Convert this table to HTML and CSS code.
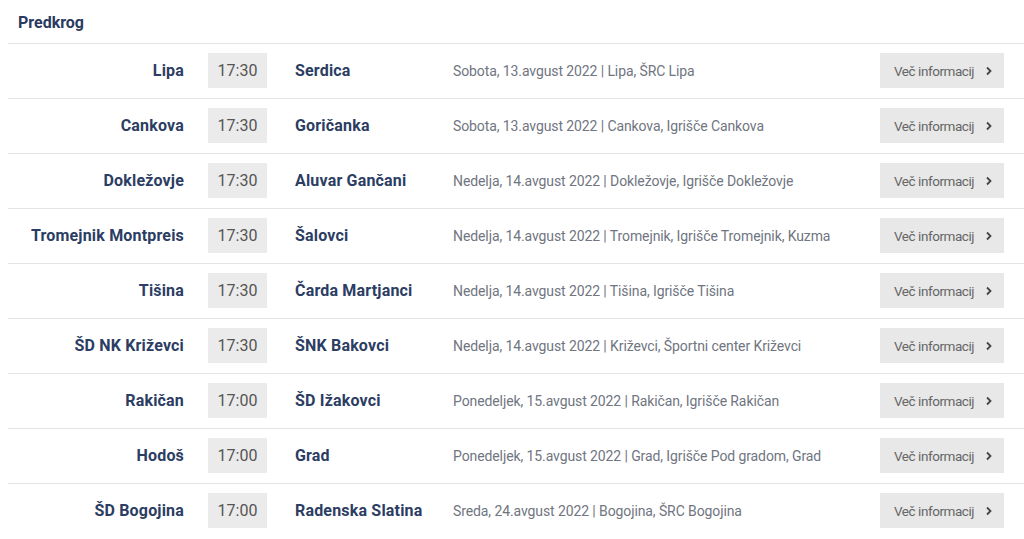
FILE: index.html
```html
<!DOCTYPE html>
<html lang="sl">
<head>
<meta charset="utf-8">
<title>Predkrog</title>
<link rel="stylesheet" href="styles.css">
</head>
<body>
<section class="round">
  <h2 class="round-title">Predkrog</h2>
  <div class="match">
    <div class="home">Lipa</div><div class="time">17:30</div><div class="away">Serdica</div>
    <div class="info">Sobota, 13.avgust 2022 | Lipa, ŠRC Lipa</div>
    <a class="more" href="#">Več informacij <svg viewBox="0 0 10 10" width="10" height="10"><path d="M3 1.5 L6.5 5 L3 8.5" fill="none" stroke="#444" stroke-width="1.8"/></svg></a>
  </div>
  <div class="match">
    <div class="home">Cankova</div><div class="time">17:30</div><div class="away">Goričanka</div>
    <div class="info">Sobota, 13.avgust 2022 | Cankova, Igrišče Cankova</div>
    <a class="more" href="#">Več informacij <svg viewBox="0 0 10 10" width="10" height="10"><path d="M3 1.5 L6.5 5 L3 8.5" fill="none" stroke="#444" stroke-width="1.8"/></svg></a>
  </div>
  <div class="match">
    <div class="home">Dokležovje</div><div class="time">17:30</div><div class="away">Aluvar Gančani</div>
    <div class="info">Nedelja, 14.avgust 2022 | Dokležovje, Igrišče Dokležovje</div>
    <a class="more" href="#">Več informacij <svg viewBox="0 0 10 10" width="10" height="10"><path d="M3 1.5 L6.5 5 L3 8.5" fill="none" stroke="#444" stroke-width="1.8"/></svg></a>
  </div>
  <div class="match">
    <div class="home">Tromejnik Montpreis</div><div class="time">17:30</div><div class="away">Šalovci</div>
    <div class="info">Nedelja, 14.avgust 2022 | Tromejnik, Igrišče Tromejnik, Kuzma</div>
    <a class="more" href="#">Več informacij <svg viewBox="0 0 10 10" width="10" height="10"><path d="M3 1.5 L6.5 5 L3 8.5" fill="none" stroke="#444" stroke-width="1.8"/></svg></a>
  </div>
  <div class="match">
    <div class="home">Tišina</div><div class="time">17:30</div><div class="away">Čarda Martjanci</div>
    <div class="info">Nedelja, 14.avgust 2022 | Tišina, Igrišče Tišina</div>
    <a class="more" href="#">Več informacij <svg viewBox="0 0 10 10" width="10" height="10"><path d="M3 1.5 L6.5 5 L3 8.5" fill="none" stroke="#444" stroke-width="1.8"/></svg></a>
  </div>
  <div class="match">
    <div class="home">ŠD NK Križevci</div><div class="time">17:30</div><div class="away">ŠNK Bakovci</div>
    <div class="info">Nedelja, 14.avgust 2022 | Križevci, Športni center Križevci</div>
    <a class="more" href="#">Več informacij <svg viewBox="0 0 10 10" width="10" height="10"><path d="M3 1.5 L6.5 5 L3 8.5" fill="none" stroke="#444" stroke-width="1.8"/></svg></a>
  </div>
  <div class="match">
    <div class="home">Rakičan</div><div class="time">17:00</div><div class="away">ŠD Ižakovci</div>
    <div class="info">Ponedeljek, 15.avgust 2022 | Rakičan, Igrišče Rakičan</div>
    <a class="more" href="#">Več informacij <svg viewBox="0 0 10 10" width="10" height="10"><path d="M3 1.5 L6.5 5 L3 8.5" fill="none" stroke="#444" stroke-width="1.8"/></svg></a>
  </div>
  <div class="match">
    <div class="home">Hodoš</div><div class="time">17:00</div><div class="away">Grad</div>
    <div class="info">Ponedeljek, 15.avgust 2022 | Grad, Igrišče Pod gradom, Grad</div>
    <a class="more" href="#">Več informacij <svg viewBox="0 0 10 10" width="10" height="10"><path d="M3 1.5 L6.5 5 L3 8.5" fill="none" stroke="#444" stroke-width="1.8"/></svg></a>
  </div>
  <div class="match">
    <div class="home">ŠD Bogojina</div><div class="time">17:00</div><div class="away">Radenska Slatina</div>
    <div class="info">Sreda, 24.avgust 2022 | Bogojina, ŠRC Bogojina</div>
    <a class="more" href="#">Več informacij <svg viewBox="0 0 10 10" width="10" height="10"><path d="M3 1.5 L6.5 5 L3 8.5" fill="none" stroke="#444" stroke-width="1.8"/></svg></a>
  </div>
</section>
</body>
</html>
```

FILE: styles.css
```css
html, body {
  margin: 0;
  padding: 0;
  background: #fff;
}
body {
  font-family: Roboto, "Liberation Sans", Arial, sans-serif;
  overflow: hidden;
}
.round {
  margin-left: 8px;
}
.round-title {
  margin: 0;
  height: 43px;
  box-sizing: border-box;
  padding: 13px 0 0 10px;
  font-size: 16px;
  font-weight: 700;
  color: #2b3a5e;
  line-height: 19px;
}
.match {
  display: flex;
  align-items: center;
  height: 55px;
  box-sizing: border-box;
  border-top: 1px solid #e4e4e4;
  padding-bottom: 1px;
}
.home, .away {
  font-size: 16px;
  font-weight: 700;
  color: #2c3d63;
  white-space: nowrap;
  letter-spacing: 0.18px;
}
.home {
  width: 176px;
  text-align: right;
  margin-right: 24px;
}
.time {
  width: 59px;
  height: 35px;
  line-height: 35px;
  background: #ebebeb;
  color: #555;
  font-size: 16px;
  text-align: center;
  margin-right: 28px;
}
.away {
  width: 158px;
}
.info {
  flex: 1;
  font-size: 14px;
  color: #70757f;
  white-space: nowrap;
  letter-spacing: -0.1px;
}
.more {
  width: 124px;
  height: 35px;
  margin-right: 20px;
  background: #e8e8e8;
  color: #666;
  font-size: 13.5px;
  letter-spacing: -0.45px;
  text-decoration: none;
  display: flex;
  align-items: center;
  padding-left: 14px;
  box-sizing: border-box;
  gap: 10px;
}
.more svg {
  display: block;
}
```
